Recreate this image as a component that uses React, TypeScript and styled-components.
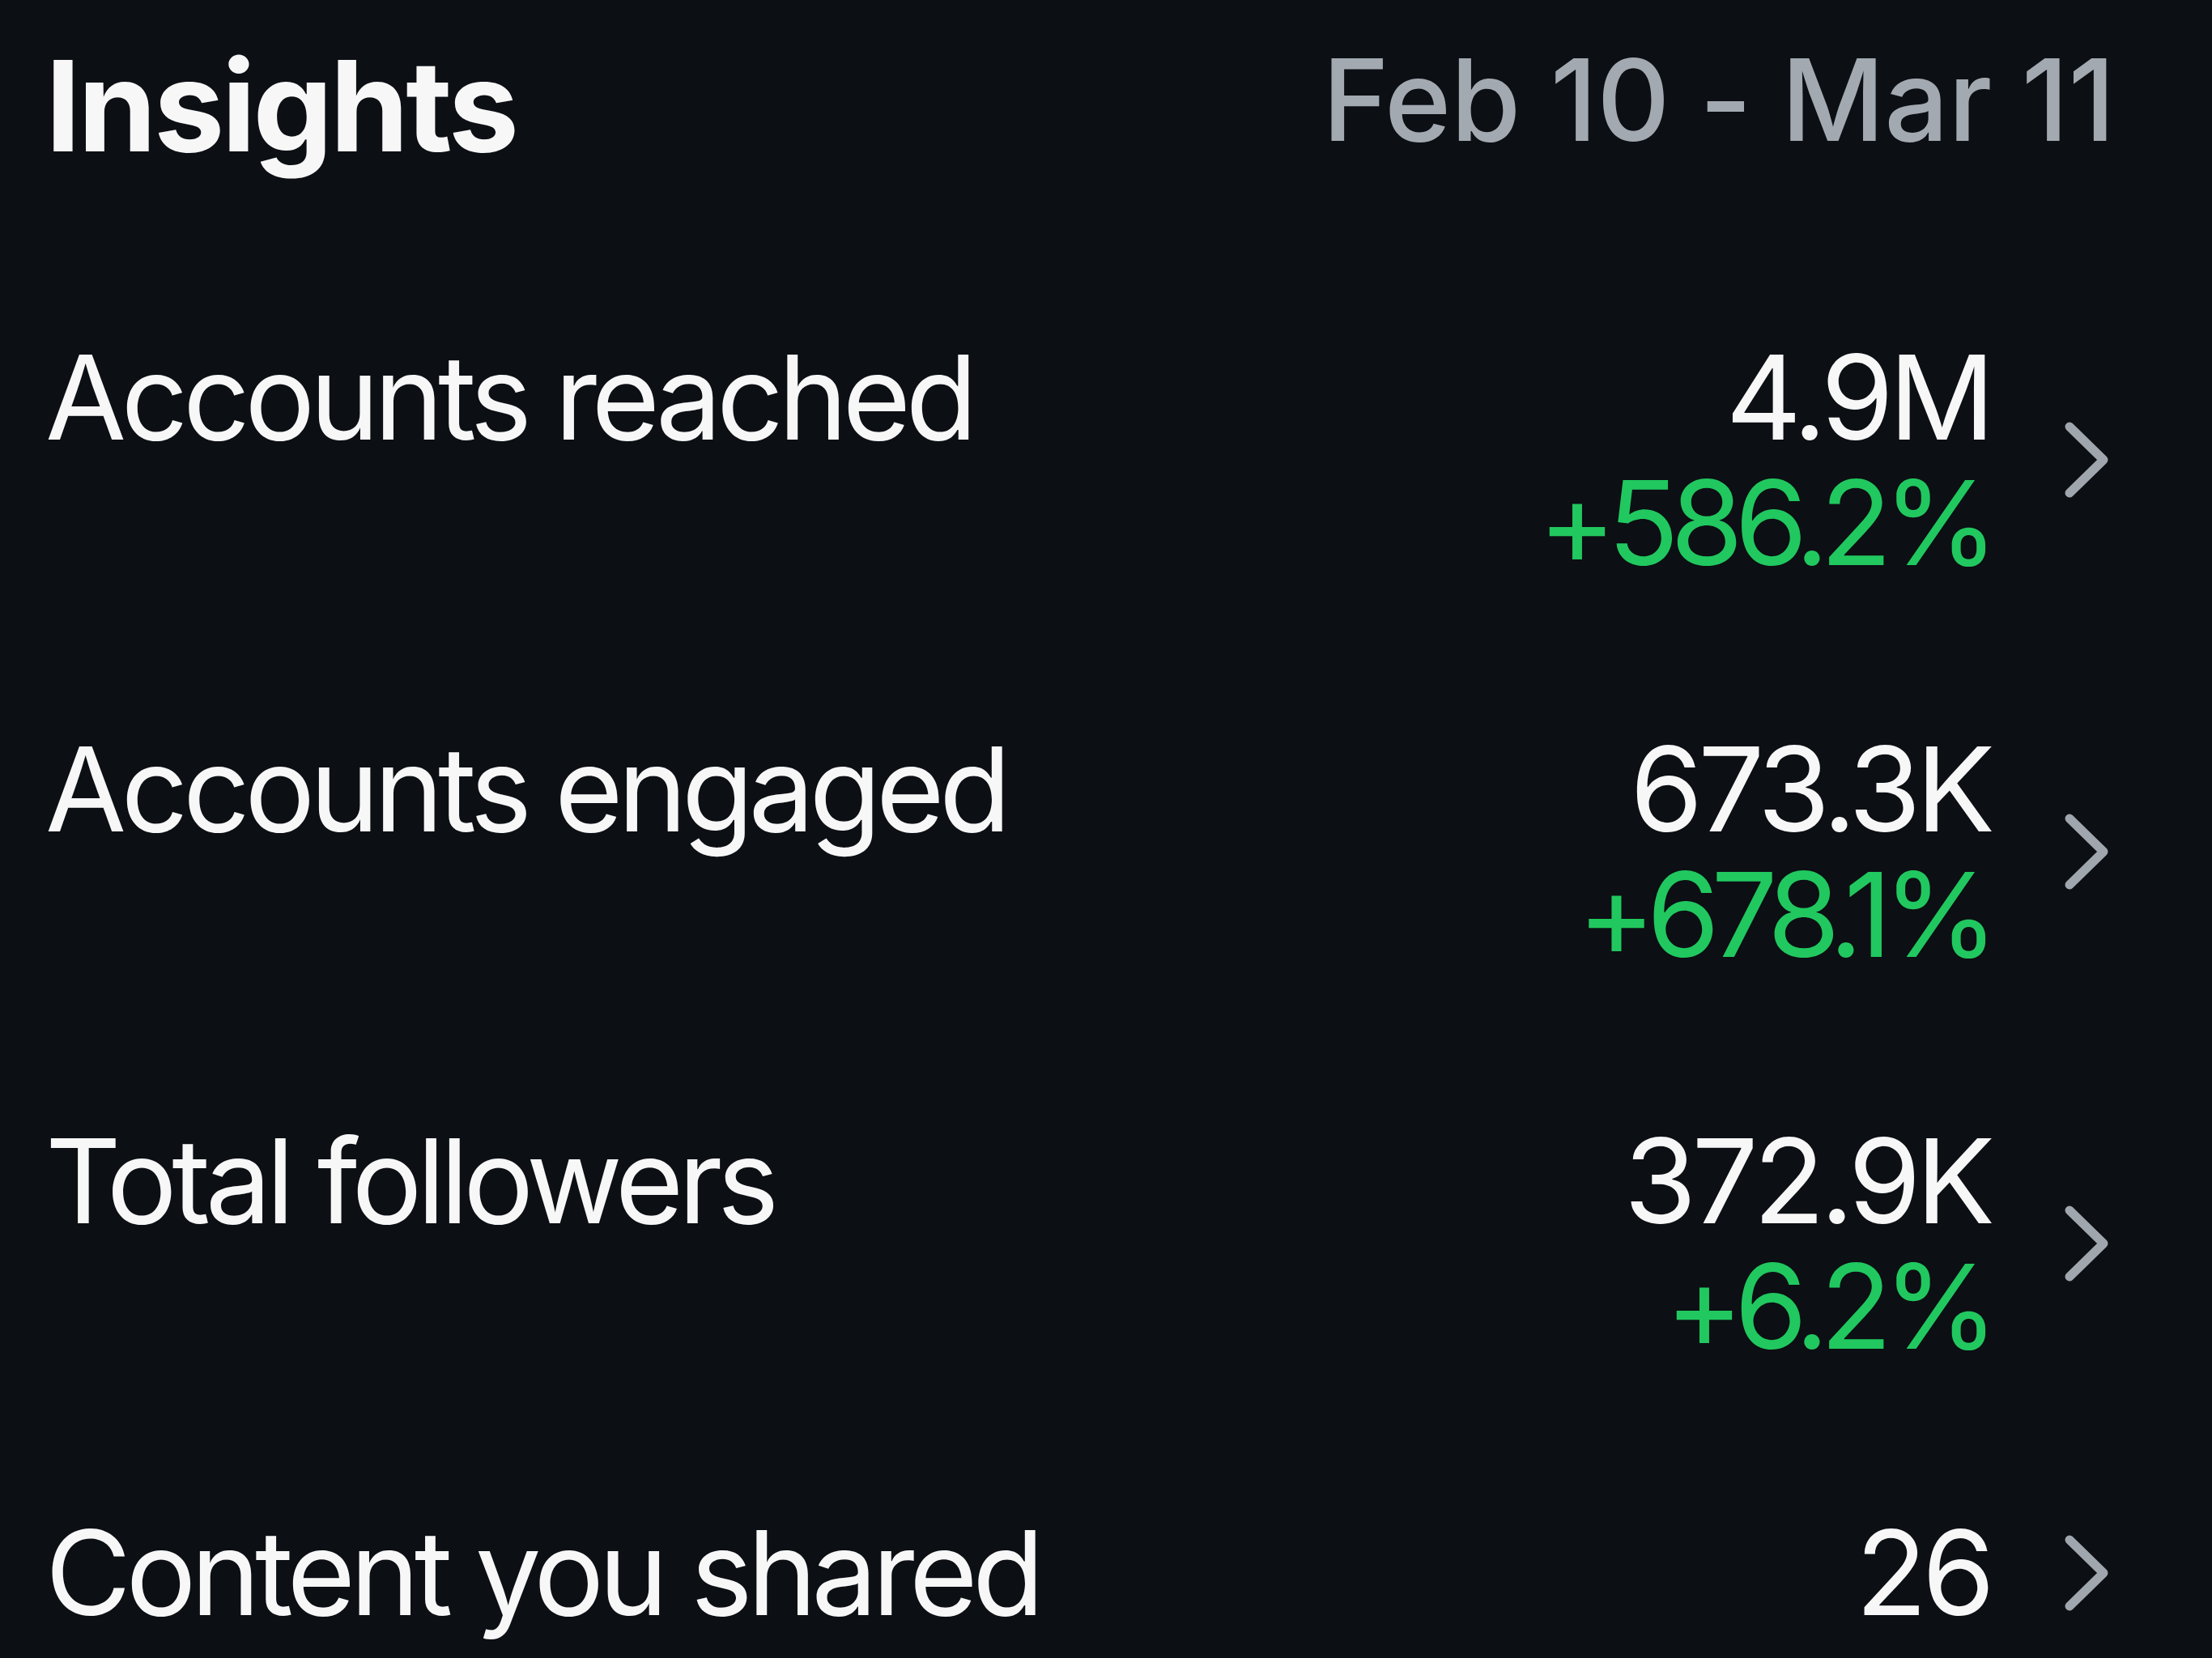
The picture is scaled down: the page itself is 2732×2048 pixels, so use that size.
import styled, { createGlobalStyle } from 'styled-components';

const GlobalStyle = createGlobalStyle`
  html, body {
    margin: 0;
    padding: 0;
    background: #0c0f14;
  }
  body {
    font-family: Inter, "Liberation Sans", Arial, sans-serif;
    -webkit-font-smoothing: antialiased;
  }
`;

const Page = styled.div`
  width: 2732px;
  height: 2048px;
  box-sizing: border-box;
  padding: 37px 128px 0 56px;
  background: #0c0f14;
  color: #f7f7f7;
  overflow: hidden;
`;

const Header = styled.header`
  display: flex;
  align-items: center;
  justify-content: space-between;
`;

const Title = styled.h1`
  margin: 0;
  font-size: 156px;
  font-weight: 700;
  line-height: 187px;
  letter-spacing: -3.5px;
  color: #f7f7f7;
`;

const DateRange = styled.div`
  font-size: 140px;
  font-weight: 500;
  line-height: 168px;
  margin: 0 -8px 15px 0;
  letter-spacing: -0.5px;
  color: #a3a9b1;
`;

const List = styled.div`
  display: flex;
  flex-direction: column;
  gap: 174px;
  margin-top: 189px;
`;

const Row = styled.div`
  display: grid;
  grid-template-columns: 1fr auto 54px;
  column-gap: 92px;
  align-items: center;
`;

const Label = styled.div`
  align-self: start;
  font-size: 145px;
  line-height: 155px;
  font-weight: 400;
  letter-spacing: -6.5px;
  color: #f7f7f7;
`;

const Values = styled.div`
  display: flex;
  flex-direction: column;
  align-items: flex-end;
  font-size: 145px;
  line-height: 155px;
  letter-spacing: -6px;
`;

const Value = styled.span`
  color: #f7f7f7;
`;

const Change = styled.span`
  color: #21c85f;
  letter-spacing: -10.5px;
`;

const Chevron = () => (
  <svg width="54" height="94" viewBox="0 0 54 94" fill="none">
    <path
      d="M6 6 L48 47 L6 88"
      stroke="#a0a6ae"
      strokeWidth="11"
      strokeLinecap="round"
      strokeLinejoin="round"
    />
  </svg>
);

const stats = [
  { label: 'Accounts reached', value: '4.9M', change: '+586.2%' },
  { label: 'Accounts engaged', value: '673.3K', change: '+678.1%' },
  { label: 'Total followers', value: '372.9K', change: '+6.2%' },
  { label: 'Content you shared', value: '26' },
];

export default function App() {
  return (
    <>
      <GlobalStyle />
      <Page>
        <Header>
          <Title>Insights</Title>
          <DateRange>Feb 10 - Mar 11</DateRange>
        </Header>
        <List>
          {stats.map((s) => (
            <Row key={s.label}>
              <Label>{s.label}</Label>
              <Values>
                <Value>{s.value}</Value>
                {s.change && <Change>{s.change}</Change>}
              </Values>
              <Chevron />
            </Row>
          ))}
        </List>
      </Page>
    </>
  );
}
